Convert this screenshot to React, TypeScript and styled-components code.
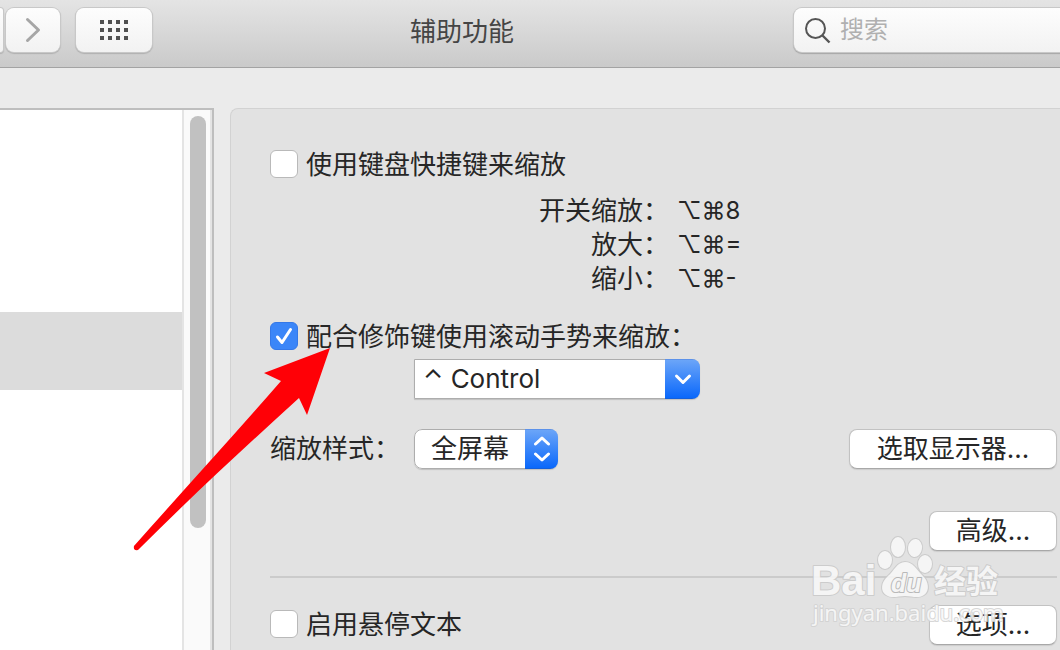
import React from 'react';
import styled, { createGlobalStyle } from 'styled-components';

const GlobalStyle = createGlobalStyle`
  * { box-sizing: border-box; }
  body {
    margin: 0;
    background: #ebebeb;
    color: #262626;
    font-family: Inter, "Noto Sans CJK SC", sans-serif;
    font-size: 26px;
    line-height: 34px;
  }
  button, input, select { font: inherit; color: inherit; }
`;

const Page = styled.div`
  position: relative;
  display: flex;
  flex-direction: column;
  height: 100vh;
  overflow: hidden;
`;

const Toolbar = styled.header`
  display: flex;
  align-items: flex-start;
  flex: none;
  height: 68px;
  padding-top: 8px;
  background: linear-gradient(#e4e4e4, #cacaca);
  border-bottom: 1px solid #a3a3a3;
`;

const ToolButton = styled.button<{ $width: number; $edge?: boolean }>`
  display: flex;
  align-items: center;
  justify-content: center;
  flex: none;
  width: ${(p) => p.$width}px;
  height: 44px;
  padding: 0;
  border: 0;
  border-radius: ${(p) => (p.$edge ? '0 8px 8px 0' : '8px')};
  background: linear-gradient(#fdfdfd, #f2f2f2);
  box-shadow: 0 0 0 1px #c8c8c8, 0 1px 1px 1px #b0b0b0;
`;

const NavGroup = styled.nav`
  display: flex;
  gap: 3px;
  margin-right: 16px;
`;

const Title = styled.h1`
  flex: 1;
  margin: 0;
  padding: 7px 22px 0 0;
  font-size: 26px;
  font-weight: 400;
  line-height: 34px;
  text-align: center;
  color: #454545;
`;

const Search = styled.label`
  display: flex;
  align-items: center;
  gap: 9px;
  flex: none;
  width: 266px;
  height: 44px;
  padding-left: 10px;
  border-radius: 8px 0 0 8px;
  background: linear-gradient(#fdfdfd, #f2f2f2);
  box-shadow: 0 0 0 1px #c8c8c8, 0 1px 1px 1px #a6a6a6;
`;

const SearchInput = styled.input`
  flex: 1;
  min-width: 0;
  height: 34px;
  padding: 0;
  border: 0;
  outline: 0;
  background: none;
  font-size: 24px;
  &::placeholder { color: #b0b0b0; opacity: 1; }
`;

const Body = styled.div`
  display: flex;
  flex: 1;
  gap: 16px;
  min-height: 0;
  padding-top: 40px;
`;

const Sidebar = styled.aside`
  display: flex;
  flex: none;
  width: 214px;
  border: solid #bebebe;
  border-width: 2px 2px 0 0;
  background: #fff;
`;

const List = styled.div`
  flex: 1;
  padding-top: 202px;
`;

const SelectedItem = styled.div`
  height: 78px;
  background: #dcdcdc;
`;

const Track = styled.div`
  width: 30px;
  padding: 6px 6px 0;
  border: solid #e4e4e4;
  border-width: 0 2px;
  background: #fafafa;
`;

const Thumb = styled.div`
  width: 16px;
  height: 412px;
  border-radius: 8px;
  background: #c1c1c1;
`;

const Panel = styled.main`
  display: flex;
  flex-direction: column;
  flex: 1;
  min-width: 0;
  padding: 39px 3px 0 39px;
  border: solid #d2d2d2;
  border-width: 1px 0 0 1px;
  border-radius: 8px 0 0 0;
  background: #e2e2e2;
`;

const CheckLabel = styled.label`
  display: flex;
  align-items: flex-start;
  gap: 8px;
`;

const Checkbox = styled.input`
  appearance: none;
  width: 28px;
  height: 28px;
  margin: 0;
  border: 1px solid #b9b9b9;
  border-radius: 6px;
  background: #fff;
  &:checked {
    border-color: #3478e8;
    background: #3b86f8;
  }
`;

const CheckBoxCell = styled.span`
  display: grid;
  flex: none;
  padding-top: 2px;
  & > * { grid-area: 1 / 1; }
  & > svg { pointer-events: none; }
`;

const Shortcuts = styled.dl`
  display: grid;
  grid-template-columns: 399px 1fr;
  column-gap: 8px;
  margin: 12px 0 24px;
`;

const Term = styled.dt`
  text-align: right;
`;

const Keys = styled.dd`
  margin: 0;
  font-size: 24px;
`;

const ModifierRow = styled.div`
  display: flex;
  padding: 5px 0 30px 144px;
`;

const StyleRow = styled.div`
  display: grid;
  grid-template-columns: 144px 1fr auto;
  align-items: center;
`;

const Picker = styled.span<{ $width: number; $arrow: number; $square?: boolean }>`
  display: grid;
  grid-template-columns: 1fr ${(p) => p.$arrow}px;
  width: ${(p) => p.$width}px;
  height: 40px;
  overflow: hidden;
  border-radius: ${(p) => (p.$square ? '0 8px 8px 0' : '8px')};
  box-shadow: 0 1px 1px #c0c0c0;
`;

const PickerSelect = styled.select<{ $indent: number; $square?: boolean }>`
  appearance: none;
  grid-area: 1 / 1 / 2 / 3;
  width: 100%;
  height: 40px;
  padding: 0 0 0 ${(p) => p.$indent}px;
  border: 1px solid #adadad;
  border-radius: ${(p) => (p.$square ? '0 8px 8px 0' : '8px')};
  background: #fff;
`;

const PickerArrow = styled.span`
  display: flex;
  align-items: center;
  justify-content: center;
  grid-area: 1 / 2;
  border-top: 1px solid #5c92ea;
  border-bottom: 1px solid #1360dc;
  background: linear-gradient(#6ba5f8, #0a68fb);
  pointer-events: none;
`;

const PushButton = styled.button<{ $width: number }>`
  width: ${(p) => p.$width}px;
  height: 40px;
  padding: 0;
  border: 1px solid #c2c2c2;
  border-bottom-color: #a8a8a8;
  border-radius: 8px;
  background: #fff;
  box-shadow: 0 1px 1px #cccccc;
`;

const AdvancedRow = styled.div`
  display: flex;
  justify-content: flex-end;
  padding: 42px 0 25px;
`;

const Divider = styled.hr`
  width: 100%;
  height: 2px;
  margin: 0;
  border: 0;
  background: #cbcbcb;
`;

const HoverRow = styled.div`
  display: flex;
  align-items: center;
  justify-content: space-between;
  padding-top: 27px;
`;

const Pointer = styled.svg`
  position: absolute;
  top: 346px;
  left: 130px;
  pointer-events: none;
`;

const Watermark = styled.svg`
  position: absolute;
  right: 52px;
  bottom: 17px;
  pointer-events: none;
`;

const dots = [0, 8, 16, 24];

function Check({ checked, children }: { checked?: boolean; children: React.ReactNode }) {
  return (
    <CheckLabel>
      <CheckBoxCell>
        <Checkbox type="checkbox" defaultChecked={checked} />
        {checked && (
          <svg width="28" height="28" viewBox="0 0 28 28" fill="none" stroke="#fff" strokeWidth="3" strokeLinecap="round" strokeLinejoin="round">
            <path d="M7.5 15 12 20.5 20.5 7.5" />
          </svg>
        )}
      </CheckBoxCell>
      {children}
    </CheckLabel>
  );
}

export default function App() {
  return (
    <>
      <GlobalStyle />
      <Page>
        <Toolbar>
          <NavGroup>
            <ToolButton $width={3} $edge aria-label="后退" />
            <ToolButton $width={54} aria-label="前进">
              <svg width="16" height="26" viewBox="0 0 16 26" fill="none" stroke="#a6a6a6" strokeWidth="3" strokeLinecap="round" strokeLinejoin="round">
                <path d="M2.5 2.5 13.5 13 2.5 23.5" />
              </svg>
            </ToolButton>
          </NavGroup>
          <ToolButton $width={76} aria-label="显示全部">
            <svg width="28" height="20" viewBox="0 0 28 20" fill="#505050">
              {dots.map((x) => dots.slice(0, 3).map((y) => (
                <rect key={`${x}-${y}`} x={x} y={y} width="4" height="4" />
              )))}
            </svg>
          </ToolButton>
          <Title>辅助功能</Title>
          <Search>
            <svg width="27" height="27" viewBox="0 0 27 27" fill="none" stroke="#555" strokeWidth="2">
              <circle cx="11.5" cy="11.5" r="9.5" />
              <path d="M18 18 25.5 25.5" strokeWidth="2.4" />
            </svg>
            <SearchInput type="text" placeholder="搜索" aria-label="搜索" />
          </Search>
        </Toolbar>

        <Body>
          <Sidebar>
            <List>
              <SelectedItem />
            </List>
            <Track>
              <Thumb />
            </Track>
          </Sidebar>

          <Panel>
            <Check>使用键盘快捷键来缩放</Check>
            <Shortcuts>
              <Term>开关缩放：</Term>
              <Keys>⌥⌘8</Keys>
              <Term>放大：</Term>
              <Keys>⌥⌘=</Keys>
              <Term>缩小：</Term>
              <Keys>⌥⌘-</Keys>
            </Shortcuts>

            <Check checked>配合修饰键使用滚动手势来缩放：</Check>
            <ModifierRow>
              <Picker $width={286} $arrow={35} $square>
                <PickerSelect $indent={8} $square aria-label="修饰键">
                  <option>⌃ Control</option>
                </PickerSelect>
                <PickerArrow>
                  <svg width="18" height="12" viewBox="0 0 18 12" fill="none" stroke="#fff" strokeWidth="3" strokeLinecap="round" strokeLinejoin="round">
                    <path d="M2.5 3 9 9.5 15.5 3" />
                  </svg>
                </PickerArrow>
              </Picker>
            </ModifierRow>

            <StyleRow>
              <label htmlFor="zoom-style">缩放样式：</label>
              <Picker $width={144} $arrow={33}>
                <PickerSelect id="zoom-style" $indent={16}>
                  <option>全屏幕</option>
                </PickerSelect>
                <PickerArrow>
                  <svg width="18" height="26" viewBox="0 0 18 26" fill="none" stroke="#fff" strokeWidth="3" strokeLinecap="round" strokeLinejoin="round">
                    <path d="M2.5 8 9 2 15.5 8" />
                    <path d="M2.5 18 9 24 15.5 18" />
                  </svg>
                </PickerArrow>
              </Picker>
              <PushButton $width={208}>选取显示器...</PushButton>
            </StyleRow>

            <AdvancedRow>
              <PushButton $width={128}>高级...</PushButton>
            </AdvancedRow>
            <Divider />
            <HoverRow>
              <Check>启用悬停文本</Check>
              <PushButton $width={128}>选项...</PushButton>
            </HoverRow>
          </Panel>
        </Body>

        <Pointer width="204" height="208" viewBox="0 0 204 208" fill="#ff0006">
          <path d="M200 2 134 27 151 35C105 88 50 148 4 200Q3 205 8 204C60 152 115 101 169 52L177 69Z" />
        </Pointer>

        <Watermark width="200" height="100" viewBox="0 0 200 100" fill="#f8f8f8" stroke="#c9c9c9" strokeWidth="2" strokeLinejoin="round" paintOrder="stroke" opacity="0.88">
          <text x="3" y="62" fontFamily="Liberation Sans" fontWeight="700" fontSize="42">Bai</text>
          <ellipse cx="77" cy="27" rx="7" ry="9" />
          <ellipse cx="90" cy="14" rx="7" ry="10" />
          <ellipse cx="107" cy="15" rx="7" ry="9" transform="rotate(8 107 15)" />
          <ellipse cx="117" cy="31" rx="7" ry="9" />
          <path d="M97 29C105 29 108 36 114 42C121 48 122 58 116 62C110 66 104 63 97 63C90 63 84 66 78 62C72 58 73 49 80 43C86 38 89 29 97 29Z" />
          <text x="83" y="59" fontFamily="Liberation Sans" fontStyle="italic" fontWeight="700" fontSize="25" stroke="#b4b4b4">du</text>
          <text x="126" y="60" fontFamily="Noto Sans CJK SC" fontWeight="700" fontSize="32">经验</text>
          <text x="5" y="88" fontFamily="Noto Sans" fontSize="22" stroke="#d2d2d2">jingyan.baidu.com</text>
        </Watermark>
      </Page>
    </>
  );
}
